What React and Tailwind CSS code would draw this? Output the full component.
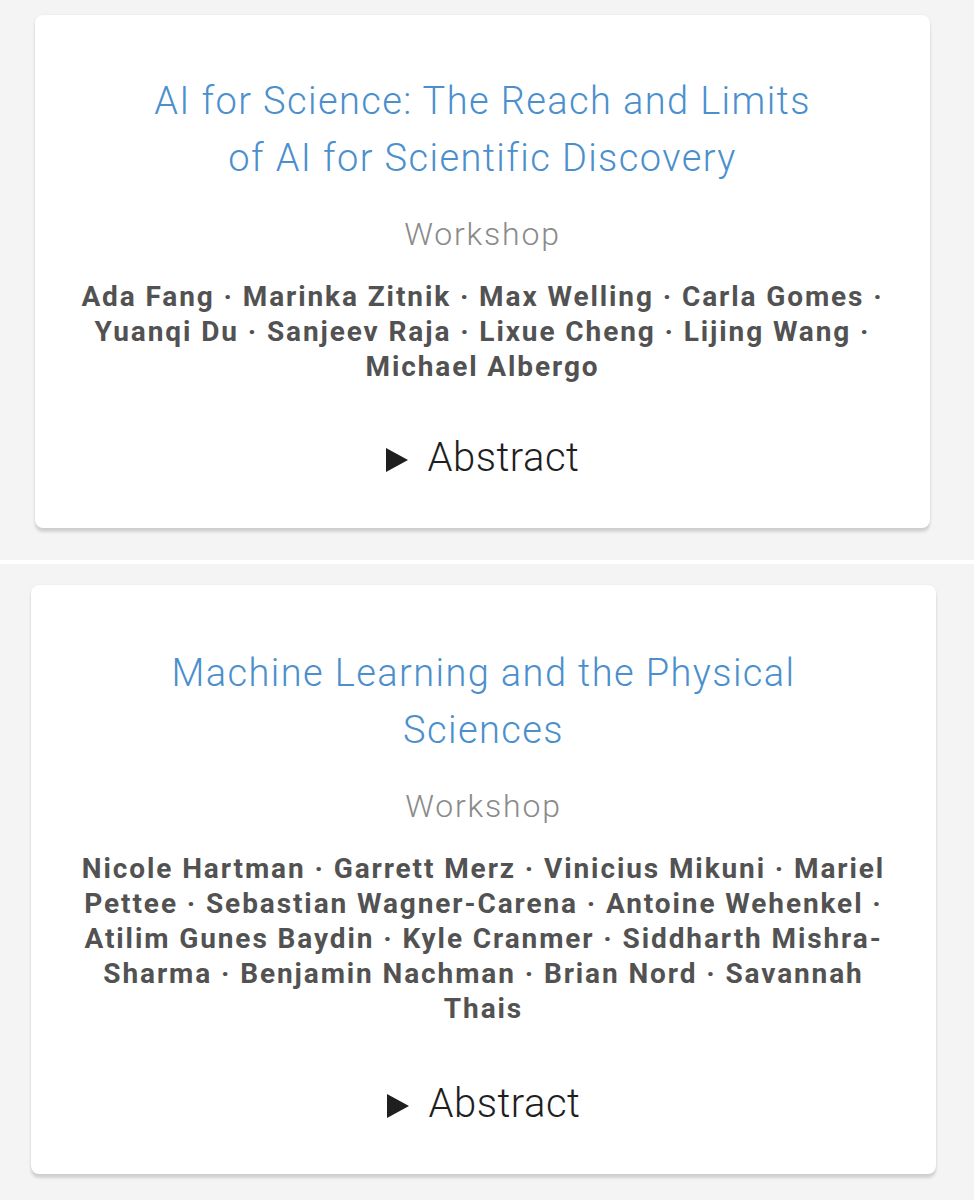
import React from 'react';

const events = [
  {
    title: ['AI for Science: The Reach and Limits', 'of AI for Scientific Discovery'],
    authors: [
      'Ada Fang · Marinka Zitnik · Max Welling · Carla Gomes ·',
      'Yuanqi Du · Sanjeev Raja · Lixue Cheng · Lijing Wang ·',
      'Michael Albergo',
    ],
  },
  {
    title: ['Machine Learning and the Physical', 'Sciences'],
    authors: [
      'Nicole Hartman · Garrett Merz · Vinicius Mikuni · Mariel',
      'Pettee · Sebastian Wagner-Carena · Antoine Wehenkel ·',
      'Atilim Gunes Baydin · Kyle Cranmer · Siddharth Mishra-',
      'Sharma · Benjamin Nachman · Brian Nord · Savannah',
      'Thais',
    ],
  },
];

const EventCard = ({ event, top, abstractGap }) => (
  <div
    className={`bg-white rounded-[8px] shadow-[0_4px_3px_rgba(0,0,0,0.14),0_0_2px_rgba(0,0,0,0.08)] text-center ${top} pb-[45px]`}
  >
    {/* Title */}
    <h3 className="m-0 text-[38px] leading-[57px] font-light tracking-[1.4px] text-[#4b8fcd]">
      {event.title.map((line, i) => (
        <span key={i} className="block whitespace-nowrap">
          {line}
        </span>
      ))}
    </h3>

    <p className="mt-[27px] text-[32px] leading-[40px] font-light tracking-[1.8px] text-[#8a8a8a]">
      Workshop
    </p>

    {/* Authors */}
    <p className="mt-[25px] text-[28px] leading-[35px] font-bold tracking-[1.9px] text-[#525252]">
      {event.authors.map((line, i) => (
        <span key={i} className="block whitespace-nowrap">
          {line}
        </span>
      ))}
    </p>

    {/* Abstract toggle */}
    <div
      className={`${abstractGap} flex items-center justify-center gap-[20px] text-[40px] leading-[50px] font-light tracking-[0.5px] text-[#1f1f1f]`}
    >
      <svg width="22" height="24" viewBox="0 0 22 24" className="mt-[4px]">
        <path d="M0 0 L22 12 L0 24 Z" fill="#1f1f1f" />
      </svg>
      <span>Abstract</span>
    </div>
  </div>
);

export default function App() {
  return (
    <div className="min-h-screen bg-[#f4f4f4] font-['Roboto',sans-serif]">
      <section className="pt-[15px] pb-[32px] pl-[35px] pr-[44px]">
        <EventCard event={events[0]} top="pt-[58px]" abstractGap="mt-[49px]" />
      </section>
      <div className="h-[4px] bg-white" />
      <section className="pt-[21px] pb-[20px] pl-[31px] pr-[38px]">
        <EventCard event={events[1]} top="pt-[60px]" abstractGap="mt-[53px]" />
      </section>
    </div>
  );
}
